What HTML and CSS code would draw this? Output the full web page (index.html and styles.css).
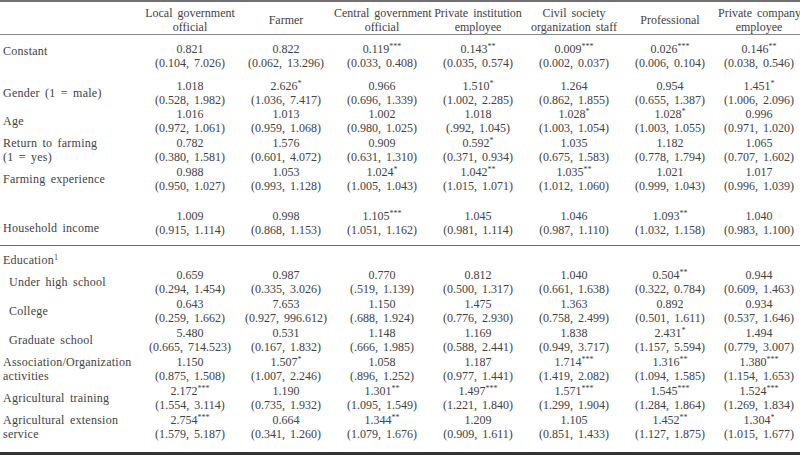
FILE: index.html
```html
<!DOCTYPE html>
<html>
<head>
<meta charset="utf-8">
<link rel="stylesheet" href="styles.css">
</head>
<body>
<table class="tbl">
<colgroup>
<col class="c-label"><col class="c-num"><col class="c-num"><col class="c-num"><col class="c-num"><col class="c-num"><col class="c-num"><col class="c-last">
</colgroup>
<thead>
<tr class="head">
<th></th>
<th>Local government<br>official</th>
<th>Farmer</th>
<th>Central government<br>official</th>
<th>Private institution<br>employee</th>
<th>Civil society<br>organization staff</th>
<th>Professional</th>
<th>Private company<br>employee</th>
</tr>
</thead>
<tbody>
<tr class="r-const">
<td class="lbl">Constant</td>
<td>0.821<br>(0.104, 7.026)</td>
<td>0.822<br>(0.062, 13.296)</td>
<td>0.119<sup>***</sup><br>(0.033, 0.408)</td>
<td>0.143<sup>**</sup><br>(0.035, 0.574)</td>
<td>0.009<sup>***</sup><br>(0.002, 0.037)</td>
<td>0.026<sup>***</sup><br>(0.006, 0.104)</td>
<td>0.146<sup>**</sup><br>(0.038, 0.546)</td>
</tr>
<tr class="r-gender">
<td class="lbl">Gender (1 = male)</td>
<td>1.018<br>(0.528, 1.982)</td>
<td>2.626<sup>*</sup><br>(1.036, 7.417)</td>
<td>0.966<br>(0.696, 1.339)</td>
<td>1.510<sup>*</sup><br>(1.002, 2.285)</td>
<td>1.264<br>(0.862, 1.855)</td>
<td>0.954<br>(0.655, 1.387)</td>
<td>1.451<sup>*</sup><br>(1.006, 2.096)</td>
</tr>
<tr class="r">
<td class="lbl">Age</td>
<td>1.016<br>(0.972, 1.061)</td>
<td>1.013<br>(0.959, 1.068)</td>
<td>1.002<br>(0.980, 1.025)</td>
<td>1.018<br>(.992, 1.045)</td>
<td>1.028<sup>*</sup><br>(1.003, 1.054)</td>
<td>1.028<sup>*</sup><br>(1.003, 1.055)</td>
<td>0.996<br>(0.971, 1.020)</td>
</tr>
<tr class="r">
<td class="lbl">Return to farming<br>(1 = yes)</td>
<td>0.782<br>(0.380, 1.581)</td>
<td>1.576<br>(0.601, 4.072)</td>
<td>0.909<br>(0.631, 1.310)</td>
<td>0.592<sup>*</sup><br>(0.371, 0.934)</td>
<td>1.035<br>(0.675, 1.583)</td>
<td>1.182<br>(0.778, 1.794)</td>
<td>1.065<br>(0.707, 1.602)</td>
</tr>
<tr class="r">
<td class="lbl">Farming experience</td>
<td>0.988<br>(0.950, 1.027)</td>
<td>1.053<br>(0.993, 1.128)</td>
<td>1.024<sup>*</sup><br>(1.005, 1.043)</td>
<td>1.042<sup>**</sup><br>(1.015, 1.071)</td>
<td>1.035<sup>**</sup><br>(1.012, 1.060)</td>
<td>1.021<br>(0.999, 1.043)</td>
<td>1.017<br>(0.996, 1.039)</td>
</tr>
<tr class="r-income">
<td class="lbl">Household income</td>
<td>1.009<br>(0.915, 1.114)</td>
<td>0.998<br>(0.868, 1.153)</td>
<td>1.105<sup>***</sup><br>(1.051, 1.162)</td>
<td>1.045<br>(0.981, 1.114)</td>
<td>1.046<br>(0.987, 1.110)</td>
<td>1.093<sup>**</sup><br>(1.032, 1.158)</td>
<td>1.040<br>(0.983, 1.100)</td>
</tr>
<tr class="r-edu">
<td class="lbl">Education<sup>1</sup></td>
<td></td><td></td><td></td><td></td><td></td><td></td><td></td>
</tr>
<tr class="r">
<td class="lbl sub">Under high school</td>
<td>0.659<br>(0.294, 1.454)</td>
<td>0.987<br>(0.335, 3.026)</td>
<td>0.770<br>(.519, 1.139)</td>
<td>0.812<br>(0.500, 1.317)</td>
<td>1.040<br>(0.661, 1.638)</td>
<td>0.504<sup>**</sup><br>(0.322, 0.784)</td>
<td>0.944<br>(0.609, 1.463)</td>
</tr>
<tr class="r">
<td class="lbl sub">College</td>
<td>0.643<br>(0.259, 1.662)</td>
<td>7.653<br>(0.927, 996.612)</td>
<td>1.150<br>(.688, 1.924)</td>
<td>1.475<br>(0.776, 2.930)</td>
<td>1.363<br>(0.758, 2.499)</td>
<td>0.892<br>(0.501, 1.611)</td>
<td>0.934<br>(0.537, 1.646)</td>
</tr>
<tr class="r">
<td class="lbl sub">Graduate school</td>
<td>5.480<br>(0.665, 714.523)</td>
<td>0.531<br>(0.167, 1.832)</td>
<td>1.148<br>(.666, 1.985)</td>
<td>1.169<br>(0.588, 2.441)</td>
<td>1.838<br>(0.949, 3.717)</td>
<td>2.431<sup>*</sup><br>(1.157, 5.594)</td>
<td>1.494<br>(0.779, 3.007)</td>
</tr>
<tr class="r">
<td class="lbl">Association/Organization<br>activities</td>
<td>1.150<br>(0.875, 1.508)</td>
<td>1.507<sup>*</sup><br>(1.007, 2.246)</td>
<td>1.058<br>(.896, 1.252)</td>
<td>1.187<br>(0.977, 1.441)</td>
<td>1.714<sup>***</sup><br>(1.419, 2.082)</td>
<td>1.316<sup>**</sup><br>(1.094, 1.585)</td>
<td>1.380<sup>***</sup><br>(1.154, 1.653)</td>
</tr>
<tr class="r">
<td class="lbl">Agricultural training</td>
<td>2.172<sup>***</sup><br>(1.554, 3.114)</td>
<td>1.190<br>(0.735, 1.932)</td>
<td>1.301<sup>**</sup><br>(1.095, 1.549)</td>
<td>1.497<sup>***</sup><br>(1.221, 1.840)</td>
<td>1.571<sup>***</sup><br>(1.299, 1.904)</td>
<td>1.545<sup>***</sup><br>(1.284, 1.864)</td>
<td>1.524<sup>***</sup><br>(1.269, 1.834)</td>
</tr>
<tr class="r r-last">
<td class="lbl">Agricultural extension<br>service</td>
<td>2.754<sup>***</sup><br>(1.579, 5.187)</td>
<td>0.664<br>(0.341, 1.260)</td>
<td>1.344<sup>**</sup><br>(1.079, 1.676)</td>
<td>1.209<br>(0.909, 1.611)</td>
<td>1.105<br>(0.851, 1.433)</td>
<td>1.452<sup>**</sup><br>(1.127, 1.875)</td>
<td>1.304<sup>*</sup><br>(1.015, 1.677)</td>
</tr>
</tbody>
</table>
</body>
</html>
```
FILE: styles.css
```css
html, body {
  margin: 0;
  padding: 0;
  background: #ffffff;
}
body {
  font-family: "Liberation Serif", "Times New Roman", serif;
  font-size: 12px;
  color: #424242;
  word-spacing: 2px;
}
.tbl {
  width: 800px;
  border-collapse: collapse;
  table-layout: fixed;
}
.c-label { width: 142px; }
.c-num { width: 96px; }
.c-last { width: 82px; }
th, td {
  padding: 0;
  line-height: 14px;
  text-align: center;
  vertical-align: top;
  font-weight: normal;
  white-space: nowrap;
}
.head th {
  border-top: 2px solid #707070;
  border-bottom: 1px solid #8a8a8a;
  padding-top: 4px;
  padding-bottom: 0;
  height: 28px;
  vertical-align: middle;
}
td.lbl {
  text-align: left;
  padding-left: 3px;
  vertical-align: middle;
  letter-spacing: 0.25px;
}
td.sub { padding-left: 9px; }
sup {
  font-size: 8px;
  line-height: 0;
  vertical-align: 4px;
  word-spacing: 0;
  letter-spacing: 0;
}
.r-const td { padding-top: 7px; padding-bottom: 9px; }
.r-const td.lbl { vertical-align: top; padding-top: 9px; }
.r-gender td { padding-top: 0; padding-bottom: 0; }
.r td { padding-top: 0; padding-bottom: 1px; }
.r-income td { padding-top: 15px; padding-bottom: 8px; border-bottom: 1px solid #6a6a6a; }
.r-income td.lbl { vertical-align: bottom; padding-bottom: 10px; }
.r-edu td { padding-top: 7px; padding-bottom: 1px; }
.r-last td { padding-bottom: 11px; border-bottom: 3px solid #333333; }
```
